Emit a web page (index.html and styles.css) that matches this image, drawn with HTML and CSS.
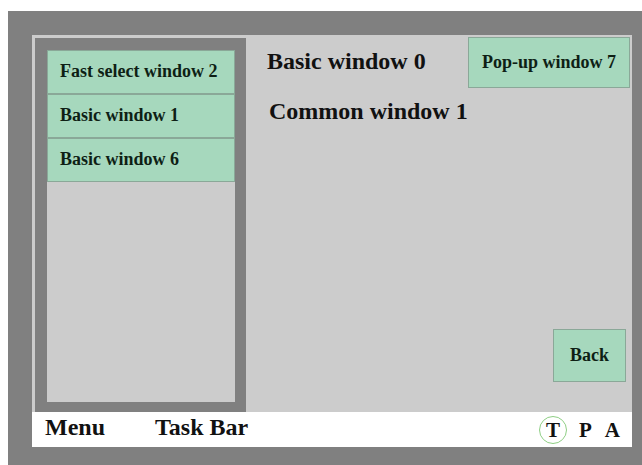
FILE: index.html
```html
<!DOCTYPE html>
<html>
<head>
    <meta charset = "utf-8">
    <meta name = "viewport" content = "width=device-width, initial-scale=1.0">
    <title>HMI screen</title>
    <link rel="stylesheet" href="styles.css">
</head>
<body>
    <!--outer frame-->
    <div class = "frame">
        <div class = "screen">
            <!--main area-->
            <div class = "main">
                <!--fast select window-->
                <div class = "sidePanel">
                    <div class = "sideList">
                        <div class = "btn sideBtn">Fast select window 2</div>
                        <div class = "btn sideBtn">Basic window 1</div>
                        <div class = "btn sideBtn">Basic window 6</div>
                    </div>
                </div>
                <!--basic window-->
                <div class = "content">
                    <div class = "header">
                        <span class = "title">Basic window 0</span>
                        <div class = "btn popupBtn">Pop-up window 7</div>
                    </div>
                    <span class = "subTitle">Common window 1</span>
                    <div class = "btn backBtn">Back</div>
                </div>
            </div>
            <!--task bar-->
            <div class = "taskBar">
                <span class = "barLabel">Menu</span>
                <span class = "barLabel taskLabel">Task Bar</span>
                <div class = "modes">
                    <span class = "mode current">T</span>
                    <span class = "mode">P</span>
                    <span class = "mode">A</span>
                </div>
            </div>
        </div>
    </div>
</body>
</html>
```

FILE: styles.css
```css
body {
    margin: 0;
    background-color: #ffffff;
    font-family: "Liberation Serif", "Times New Roman", serif;
    font-weight: bold;
    color: #111111;
}
.frame {
    margin: 11px 0 0 8px;
    width: 634px;
    height: 454px;
    box-sizing: border-box;
    padding: 24px 10px 18px 24px;
    background-color: #808080;
}
.screen {
    width: 600px;
    height: 412px;
    display: flex;
    flex-direction: column;
    background-color: #cccccc;
}
.main {
    height: 377px;
    display: flex;
}
.sidePanel {
    width: 211px;
    box-sizing: border-box;
    margin: 3px 0 0 3px;
    padding: 12px 11px 10px 12px;
    background-color: #808080;
}
.sideList {
    height: 100%;
    display: flex;
    flex-direction: column;
    background-color: #cccccc;
}
.btn {
    display: flex;
    align-items: center;
    box-sizing: border-box;
    background-color: #a6d8bd;
    border: 1px solid #8aa898;
    color: #0e1f15;
    font-size: 18px;
}
.sideBtn {
    height: 44px;
    padding-left: 12px;
    padding-bottom: 2px;
}
.content {
    flex: 1;
    display: flex;
    flex-direction: column;
}
.header {
    display: flex;
    justify-content: space-between;
    align-items: flex-start;
}
.title {
    font-size: 24px;
    line-height: 28px;
    margin: 12px 0 0 21px;
}
.popupBtn {
    width: 162px;
    height: 51px;
    justify-content: center;
    margin: 2px 2px 0 0;
}
.subTitle {
    font-size: 24px;
    line-height: 28px;
    margin: 9px 0 0 23px;
}
.backBtn {
    width: 73px;
    height: 53px;
    justify-content: center;
    align-self: flex-end;
    margin: auto 6px 30px 0;
}
.taskBar {
    height: 35px;
    display: flex;
    align-items: center;
    padding: 0 12px 0 13px;
    background-color: #ffffff;
}
.barLabel {
    font-size: 24px;
    line-height: 28px;
    margin-bottom: 5px;
}
.taskLabel {
    margin-left: 50px;
}
.modes {
    margin-left: auto;
    display: flex;
    align-items: center;
}
.mode {
    font-size: 21px;
    line-height: 24px;
    margin-left: 13px;
}
.current {
    width: 28px;
    height: 28px;
    box-sizing: border-box;
    border: 1.5px solid #8fcf85;
    border-radius: 50%;
    display: flex;
    align-items: center;
    justify-content: center;
    margin-left: 0;
    margin-right: -1px;
}
```
